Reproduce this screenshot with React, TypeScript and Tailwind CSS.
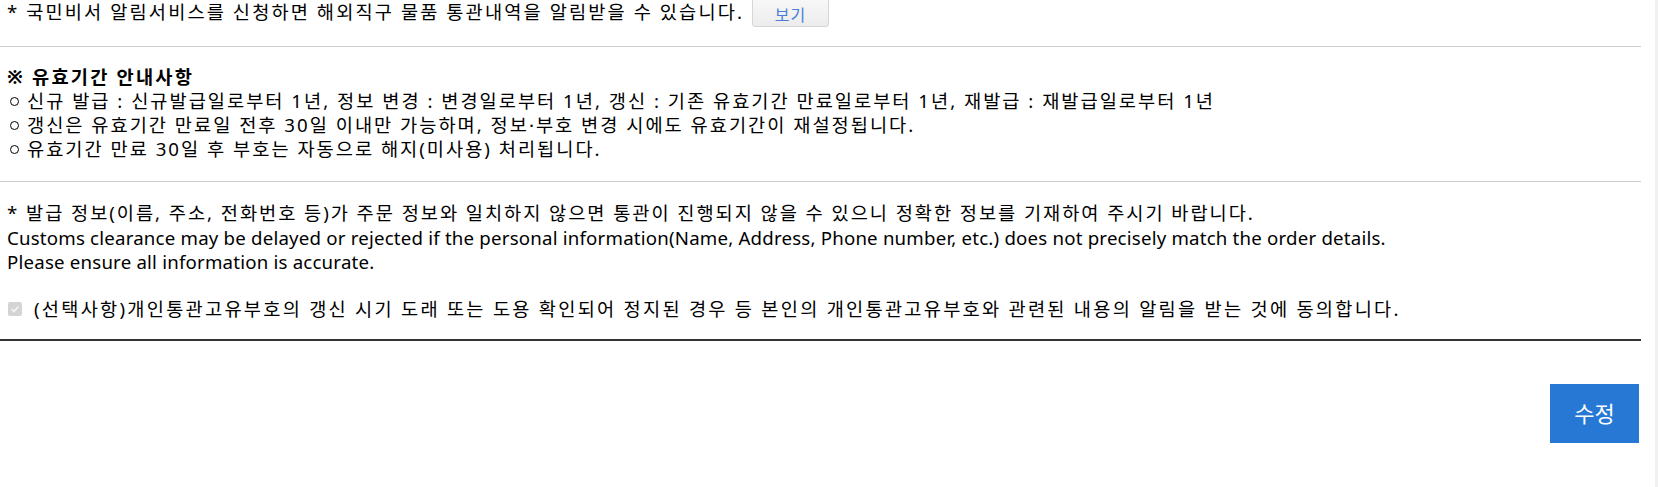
import React from 'react';

const font = { fontFamily: '"Noto Sans", "Noto Sans CJK KR", sans-serif' };

const periodNotes = [
  '신규 발급 : 신규발급일로부터 1년, 정보 변경 : 변경일로부터 1년, 갱신 : 기존 유효기간 만료일로부터 1년, 재발급 : 재발급일로부터 1년',
  '갱신은 유효기간 만료일 전후 30일 이내만 가능하며, 정보·부호 변경 시에도 유효기간이 재설정됩니다.',
  '유효기간 만료 30일 후 부호는 자동으로 해지(미사용) 처리됩니다.',
];

const App = () => {
  return (
    <div className="flex h-[487px] w-full overflow-hidden bg-white text-[18.67px] leading-[24px] text-black" style={font}>
      <div className="flex w-[1641px] shrink-0 flex-col">
        {/* 알림서비스 안내 */}
        <div className="-mt-[8px] flex items-start pl-[7px]">
          <p className="mt-[8px] whitespace-nowrap tracking-[2.1px]">* 국민비서 알림서비스를 신청하면 해외직구 물품 통관내역을 알림받을 수 있습니다.</p>
          <button className="ml-[8px] flex h-[35px] w-[77px] items-center justify-center rounded-[3px] border border-[#d6d6d6] bg-gradient-to-b from-[#fbfbfb] to-[#ececec] pt-[10px] text-[16px] tracking-[1px] text-[#4a7ed8]">
            보기
          </button>
        </div>

        <div className="mt-[19px] h-px bg-[#cfcfcf]" />

        {/* 유효기간 안내사항 */}
        <div className="mt-[18px] pl-[7px] tracking-[2px]">
          <p className="font-bold tracking-[2.2px]">※ 유효기간 안내사항</p>
          {periodNotes.map((note, i) => (
            <p key={i} className="flex items-center whitespace-nowrap">
              <span className="ml-[3px] mr-[8px] inline-block h-[9px] w-[9px] shrink-0 rounded-full border-[1.5px] border-black" />
              <span>{note}</span>
            </p>
          ))}
        </div>

        <div className="mt-[20px] h-px bg-[#cfcfcf]" />

        <div className="mt-[19px] pl-[7px] leading-[24.5px]">
          <p className="whitespace-nowrap tracking-[1.95px]">* 발급 정보(이름, 주소, 전화번호 등)가 주문 정보와 일치하지 않으면 통관이 진행되지 않을 수 있으니 정확한 정보를 기재하여 주시기 바랍니다.</p>
          <p className="whitespace-nowrap tracking-[0.2px]">Customs clearance may be delayed or rejected if the personal information(Name, Address, Phone number, etc.) does not precisely match the order details.</p>
          <p className="whitespace-nowrap tracking-[0.2px]">Please ensure all information is accurate.</p>
        </div>

        <label className="mt-[22px] flex items-center pl-[8px]">
          <span className="flex h-[14px] w-[14px] items-center justify-center rounded-[2px] bg-[#d4d4d4]">
            <svg viewBox="0 0 12 12" className="h-[10px] w-[10px]">
              <path d="M2 6.2 L4.8 9 L10 3" fill="none" stroke="#f4f4f4" strokeWidth="2" />
            </svg>
          </span>
          <span className="ml-[12px] whitespace-nowrap tracking-[2.25px]">(선택사항)개인통관고유부호의 갱신 시기 도래 또는 도용 확인되어 정지된 경우 등 본인의 개인통관고유부호와 관련된 내용의 알림을 받는 것에 동의합니다.</span>
        </label>

        <div className="mt-[18px] h-[2px] bg-[#333333]" />

        <div className="mt-[43px] flex justify-end pr-[2px]">
          <button className="flex h-[59px] w-[89px] items-center justify-center bg-[#2678d4] text-[22px] text-white">
            수정
          </button>
        </div>
      </div>
      <div className="flex-1" />
      <div className="w-[3px] bg-[#f1f1f1]" />
    </div>
  );
};

export default App;
